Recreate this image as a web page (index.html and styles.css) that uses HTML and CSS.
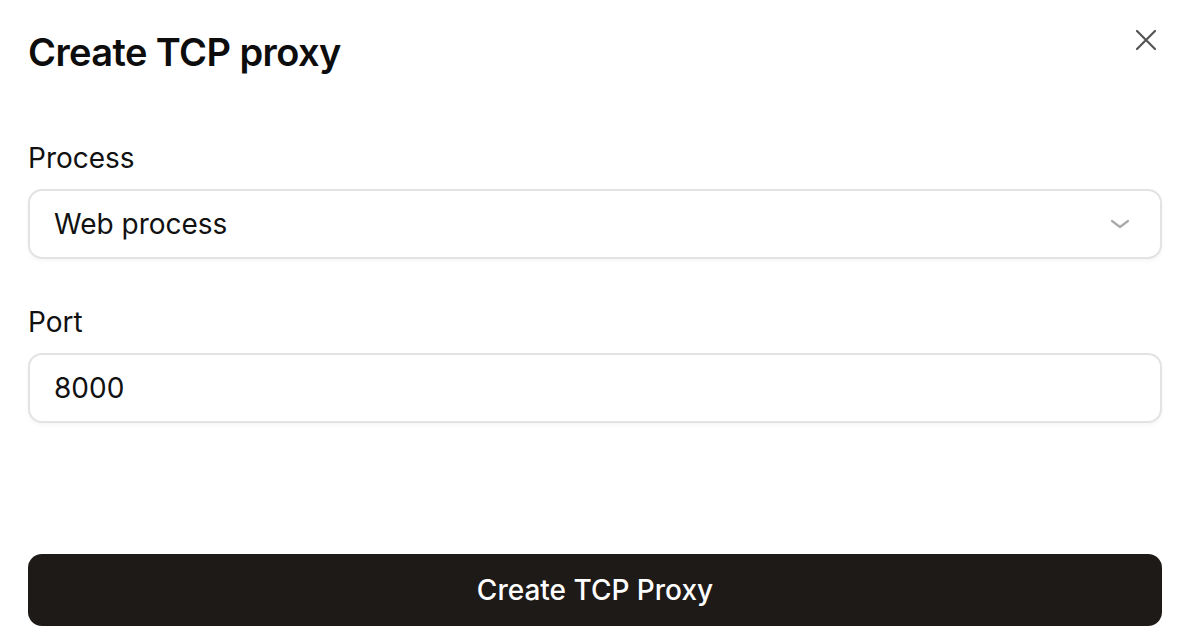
FILE: index.html
```html
<!DOCTYPE html>
<html lang="en">
<head>
    <meta charset="UTF-8">
    <meta name="viewport" content="width=device-width, initial-scale=1.0">
    <title>Create TCP proxy</title>
    <link rel="stylesheet" href="styles.css">
</head>
<body>
    <div class="modal">
        <div class="modal-header">
            <h1>Create TCP proxy</h1>
            <button class="close-btn" aria-label="Close">
                <svg width="24" height="24" viewBox="0 0 24 24" fill="none" stroke="#555" stroke-width="2.2" stroke-linecap="round">
                    <path d="M3 3L21 21M21 3L3 21"/>
                </svg>
            </button>
        </div>

        <div class="field">
            <label>Process</label>
            <div class="select-box">
                <span>Web process</span>
                <svg width="24" height="24" viewBox="0 0 24 24" fill="none" stroke="#aaa" stroke-width="2.2" stroke-linecap="round" stroke-linejoin="round">
                    <path d="M4 9l8 6 8-6"/>
                </svg>
            </div>
        </div>

        <div class="field">
            <label>Port</label>
            <input type="text" class="text-input" value="8000" />
        </div>

        <button class="submit-btn">Create TCP Proxy</button>
    </div>
</body>
</html>
```

FILE: styles.css
```css
/* Create TCP proxy modal */
body {
    font-family: Inter, "Noto Sans", sans-serif;
    background-color: #fff;
    color: #111;
    margin: 0;
    padding: 0;
}

.modal {
    height: 644px;
    box-sizing: border-box;
    padding: 28px 24px 18px 28px;
    display: flex;
    flex-direction: column;
}

.modal-header {
    display: flex;
    justify-content: space-between;
    align-items: flex-start;
    margin-bottom: 66px;
}

h1 {
    margin: 0;
    font-size: 38px;
    font-weight: 600;
    letter-spacing: -0.6px;
    line-height: 48px;
    color: #0d0d0d;
}

.close-btn {
    background: none;
    border: none;
    padding: 0;
    margin-top: 0;
    margin-right: 4px;
    cursor: pointer;
}

.field {
    margin-bottom: 47px;
}

label {
    display: block;
    font-size: 28px;
    line-height: 32px;
    margin-bottom: 15px;
    color: #111;
}

.select-box,
.text-input {
    width: 100%;
    box-sizing: border-box;
    height: 70px;
    border: 2px solid #e3e3e3;
    border-radius: 14px;
    box-shadow: 0 2px 4px rgba(0, 0, 0, 0.04);
    background: #fff;
    padding: 0 24px;
    font-family: inherit;
    font-size: 28px;
    color: #111;
}

.select-box {
    display: flex;
    align-items: center;
    justify-content: space-between;
    padding-right: 28px;
}

.text-input {
    outline: none;
}

.submit-btn {
    margin-top: auto;
    width: 100%;
    height: 72px;
    border: none;
    border-radius: 14px;
    background-color: #1e1a17;
    color: #fff;
    font-family: inherit;
    font-size: 28px;
    font-weight: 500;
    cursor: pointer;
}
```
